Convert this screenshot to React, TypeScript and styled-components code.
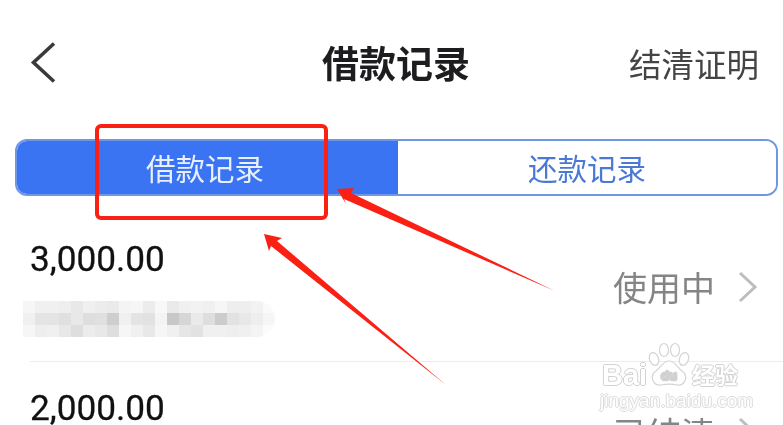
import React from "react";
import styled, { createGlobalStyle } from "styled-components";

const Global = createGlobalStyle`
  html, body { margin: 0; padding: 0; background: #fff; }
  body { font-family: "Noto Sans CJK SC", "Liberation Sans", sans-serif; }
`;

const Page = styled.div`
  position: relative;
  width: 783px;
  height: 425px;
  overflow: hidden;
  background: #fff;
  filter: blur(0.45px);
`;

const Header = styled.header`
  display: flex;
  align-items: center;
  justify-content: space-between;
  height: 125px;
  padding: 0 24px 0 30px;
  position: relative;
  box-sizing: border-box;
`;

const BackIcon = styled.svg`
  width: 30px;
  height: 44px;
  display: block;
`;

const Title = styled.h1`
  margin: 0;
  font-size: 37px;
  line-height: 1;
  font-weight: 700;
  color: #1d1d1f;
  position: absolute;
  left: 322px;
  top: 44px;
`;

const Proof = styled.div`
  font-size: 32.5px;
  line-height: 1;
  color: #444;
  margin-top: 1px;
`;

const Tabs = styled.div`
  display: flex;
  height: 57px;
  margin: 14px 5px 0 15px;
  border: 2px solid #6f97e6;
  border-radius: 12px;
  overflow: hidden;
  box-sizing: border-box;
`;

const Tab = styled.div<{ $active?: boolean }>`
  display: flex;
  align-items: center;
  justify-content: center;
  flex: ${(p) => (p.$active ? "0 0 381px" : "1")};
  font-size: 29.5px;
  line-height: 1;
  background: ${(p) => (p.$active ? "#3a74f3" : "#fff")};
  color: ${(p) => (p.$active ? "#e8effd" : "#4a78d6")};
  padding-right: ${(p) => (p.$active ? "5px" : "0")};
  box-sizing: border-box;
`;

const List = styled.div`
  padding-left: 30px;
`;

const Row = styled.div<{ $last?: boolean }>`
  display: flex;
  justify-content: space-between;
  height: ${(p) => (p.$last ? "80px" : "165px")};
  border-bottom: ${(p) => (p.$last ? "none" : "1px solid #ececec")};
`;

const RowMain = styled.div<{ $top: number }>`
  display: flex;
  flex-direction: column;
  padding-top: ${(p) => p.$top}px;
`;

const Amount = styled.div`
  font-family: Roboto, "Liberation Sans", sans-serif;
  font-size: 35.2px;
  line-height: 40px;
  color: #111113;
  -webkit-text-stroke: 0.3px #111113;
`;

const Mosaic = styled.div`
  display: grid;
  grid-template-columns: repeat(21, 12px);
  grid-auto-rows: 12px;
  width: 252px;
  margin: 22px 0 0 -7px;
  border-radius: 0 18px 18px 0;
  overflow: hidden;
`;

const Cell = styled.div<{ $v: number }>`
  background: ${(p) => `rgb(${p.$v},${p.$v},${p.$v})`};
`;

const Status = styled.div<{ $top: number }>`
  display: flex;
  align-items: center;
  gap: 22px;
  padding: ${(p) => p.$top}px 25px 0 0;
  align-self: flex-start;
`;

const StatusText = styled.span`
  font-size: 34px;
  line-height: 40px;
  color: #858585;
`;

const Chevron = styled.svg`
  width: 21px;
  height: 32px;
  display: block;
`;

const RedBox = styled.div`
  position: absolute;
  left: 95px;
  top: 124px;
  width: 233px;
  height: 96px;
  box-sizing: border-box;
  border: 4px solid #fb2014;
  border-radius: 6px;
`;

const Arrows = styled.svg`
  position: absolute;
  inset: 0;
  width: 783px;
  height: 425px;
`;

const Watermark = styled.div`
  position: absolute;
  left: 600px;
  top: 340px;
  width: 183px;
  height: 70px;
  color: #fff;
  font-family: "Liberation Sans", sans-serif;
  text-shadow: -1px 0 0 #d2d2d2, 1px 0 0 #d2d2d2, 0 -1px 0 #d2d2d2, 0 1px 0 #d2d2d2;
`;

const WmBai = styled.span`
  position: absolute;
  left: 2px;
  top: 20px;
  font-size: 29px;
  line-height: 30px;
  font-weight: 700;
`;

const WmJing = styled.span`
  position: absolute;
  left: 92px;
  top: 21px;
  font-family: "Noto Sans CJK SC", sans-serif;
  font-size: 23px;
  line-height: 26px;
  font-weight: 700;
`;

const WmUrl = styled.span`
  position: absolute;
  left: 0;
  top: 51px;
  font-size: 19px;
  line-height: 20px;
  text-shadow: -1px 0 0 #dcdcdc, 1px 0 0 #dcdcdc, 0 -1px 0 #dcdcdc, 0 1px 0 #dcdcdc;
`;

const WmPaw = styled.svg`
  position: absolute;
  left: 47px;
  top: 2px;
  width: 44px;
  height: 46px;
`;

const M = [
  [246,240,240,238,232,240,236,234,244,246,236,248,234,240,242,240,246,238,238,242,250],
  [240,228,228,224,232,222,224,206,240,228,226,244,200,214,234,222,204,226,232,238,246],
  [246,238,240,232,222,236,232,222,246,240,232,246,240,230,226,240,240,238,240,244,252],
];

export default function App() {
  return (
    <Page>
      <Global />
      <Header>
        <BackIcon viewBox="0 0 30 44">
          <path d="M24 2.5 L3.5 21.5 L24 40.5" fill="none" stroke="#3a3a3c" strokeWidth="3.6" />
        </BackIcon>
        <Title>借款记录</Title>
        <Proof>结清证明</Proof>
      </Header>
      <Tabs>
        <Tab $active>借款记录</Tab>
        <Tab>还款记录</Tab>
      </Tabs>
      <List>
        <Row>
          <RowMain $top={43}>
            <Amount>3,000.00</Amount>
            <Mosaic>
              {M.flat().map((v, i) => (
                <Cell key={i} $v={v} />
              ))}
            </Mosaic>
          </RowMain>
          <Status $top={71}>
            <StatusText>使用中</StatusText>
            <Chevron viewBox="0 0 21 32">
              <path d="M3 2 L18 16 L3 30" fill="none" stroke="#bdbdbd" strokeWidth="3" />
            </Chevron>
          </Status>
        </Row>
        <Row $last>
          <RowMain $top={26}>
            <Amount>2,000.00</Amount>
          </RowMain>
          <Status $top={51}>
            <StatusText>已结清</StatusText>
            <Chevron viewBox="0 0 21 32">
              <path d="M3 2 L18 16 L3 30" fill="none" stroke="#bdbdbd" strokeWidth="3" />
            </Chevron>
          </Status>
        </Row>
      </List>
      <Watermark>
        <WmPaw viewBox="0 0 44 46" fill="#fff" stroke="#d4d4d4" strokeWidth="1.2">
          <ellipse cx="7" cy="17" rx="4.5" ry="6.5" transform="rotate(-20 7 17)" />
          <ellipse cx="17" cy="8" rx="4.5" ry="6.5" />
          <ellipse cx="28" cy="8" rx="4.5" ry="6.5" />
          <ellipse cx="37" cy="17" rx="4.5" ry="6.5" transform="rotate(20 37 17)" />
          <path d="M22 19 C16 19 14 25 9 29 C2 34 6 44 14 43 C19 42 25 42 30 43 C38 44 42 34 35 29 C30 25 28 19 22 19 Z" />
          <text x="22" y="38" textAnchor="middle" fontFamily="Liberation Sans" fontSize="13" fontWeight="700" fill="#fff" stroke="#cfcfcf" strokeWidth="0.7">du</text>
        </WmPaw>
        <WmBai>Bai</WmBai>
        <WmJing>经验</WmJing>
        <WmUrl>jingyan.baidu.com</WmUrl>
      </Watermark>
      <RedBox />
      <Arrows viewBox="0 0 783 425">
        <polygon points="337,189 354,188 351,193 555,291 344,199 346,204" fill="#fb2014" />
        <polygon points="264,234 282,238 277,241 446,385 271,246 269,251" fill="#fb2014" />
      </Arrows>
    </Page>
  );
}
